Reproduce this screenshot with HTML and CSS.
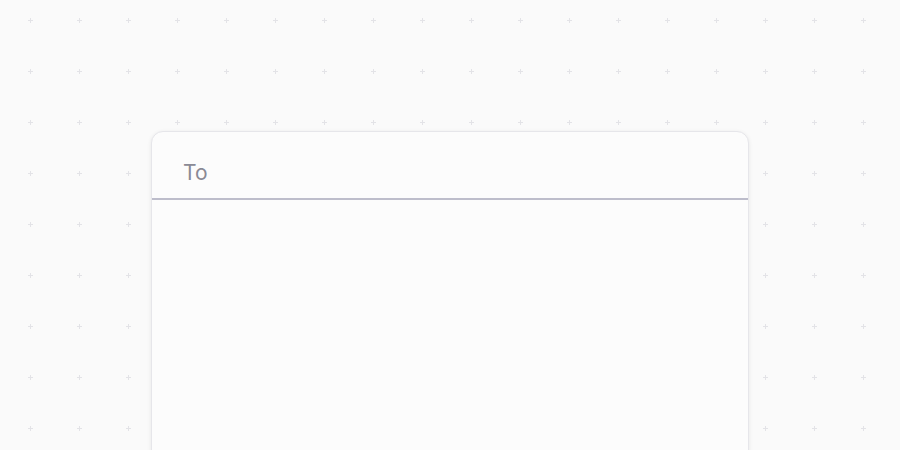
FILE: index.html
```html
<!DOCTYPE html>
<html>
<head>
<meta charset="utf-8">
<link rel="stylesheet" href="styles.css">
</head>
<body>
<div class="canvas">
  <div class="card">
    <div class="card-header">
      <span class="to-label">To</span>
    </div>
    <div class="card-body"></div>
  </div>
</div>
</body>
</html>
```
FILE: styles.css
```css
html, body {
  margin: 0;
  padding: 0;
}
body {
  width: 900px;
  height: 450px;
  overflow: hidden;
  background-color: #fafafa;
  font-family: Inter, "Noto Sans", sans-serif;
}
.canvas {
  width: 900px;
  height: 450px;
  box-sizing: border-box;
  padding-top: 131px;
  padding-left: 151px;
  background-image: url("data:image/svg+xml;utf8,<svg xmlns='http://www.w3.org/2000/svg' width='49' height='51'><rect x='0' y='2' width='5' height='1' fill='%23e3e3e7'/><rect x='2' y='0' width='1' height='5' fill='%23e3e3e7'/></svg>");
  background-size: 49px 51px;
  background-repeat: repeat;
  background-position: 28px 18px;
}
.card {
  width: 598px;
  height: 340px;
  box-sizing: border-box;
  background: #fcfcfc;
  border: 1px solid #e6e6ea;
  border-radius: 12px;
  box-shadow: 0 1px 4px rgba(0, 0, 0, 0.08);
  overflow: hidden;
}
.card-header {
  height: 68px;
  box-sizing: border-box;
  padding-left: 31px;
  padding-top: 27px;
  border-bottom: 2px solid #bdbdcb;
}
.to-label {
  font-size: 21px;
  color: #8a8a95;
  line-height: 28px;
}
.card-body {
  height: 300px;
}
```
